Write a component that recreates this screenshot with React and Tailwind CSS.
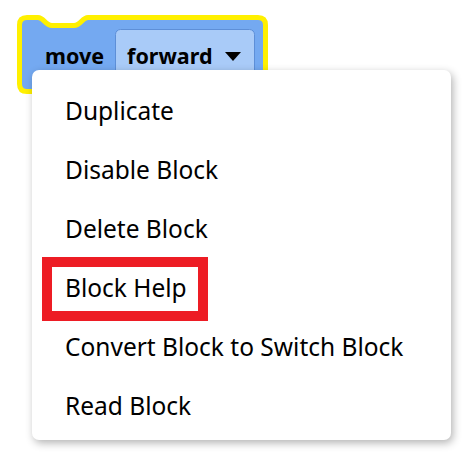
import React from 'react';

const items = [
  'Duplicate',
  'Disable Block',
  'Delete Block',
  'Block Help',
  'Convert Block to Switch Block',
  'Read Block',
];

const BlockShape = () => (
  <svg className="absolute left-0 top-0" width="280" height="100" viewBox="0 0 280 100">
    <path
      d="M19.5 25 Q19.5 17.5 27 17.5 H38 C44 17.5 45 25.5 52 25.5 H74 C81 25.5 82 17.5 88 17.5 H258 Q265.5 17.5 265.5 25 V84 Q265.5 91.5 258 91.5 H27 Q19.5 91.5 19.5 84 Z"
      fill="#74a9f1"
      stroke="#fff000"
      strokeWidth="5"
      strokeLinejoin="round"
    />
    <rect x="115.5" y="29.5" width="139" height="52" rx="5" fill="#a9cbf8" stroke="#5d8fd8" strokeWidth="1" />
  </svg>
);

const App = () => {
  return (
    <div
      className="relative w-[473px] h-[461px] overflow-hidden bg-white"
      style={{ fontFamily: '"Noto Sans", "Open Sans", sans-serif' }}
    >
      {/* selected block on the workspace */}
      <BlockShape />
      <div className="absolute left-[45px] top-[41px] flex items-center text-[21.5px] font-bold leading-[30px] text-black">
        <span>move</span>
        <span className="ml-[23px]">forward</span>
        <svg className="ml-[12px]" width="16" height="9" viewBox="0 0 16 9">
          <path d="M0 0 H16 L8 9 Z" fill="#000" />
        </svg>
      </div>

      {/* context menu */}
      <div className="absolute left-[32px] top-[70px] w-[419px] h-[370px] rounded-[7px] bg-white pt-[12px] pb-[4px] shadow-[2px_3px_8px_rgba(0,0,0,0.3)]">
        {items.map((label) => (
          <div key={label} className="flex h-[59px] items-center pl-[33px] text-[24.5px] text-black">
            {label}
          </div>
        ))}
      </div>

      {/* highlight */}
      <div className="absolute left-[42px] top-[257px] w-[166px] h-[64px] border-[10px] border-[#ed1c24]" />
    </div>
  );
};

export default App;
